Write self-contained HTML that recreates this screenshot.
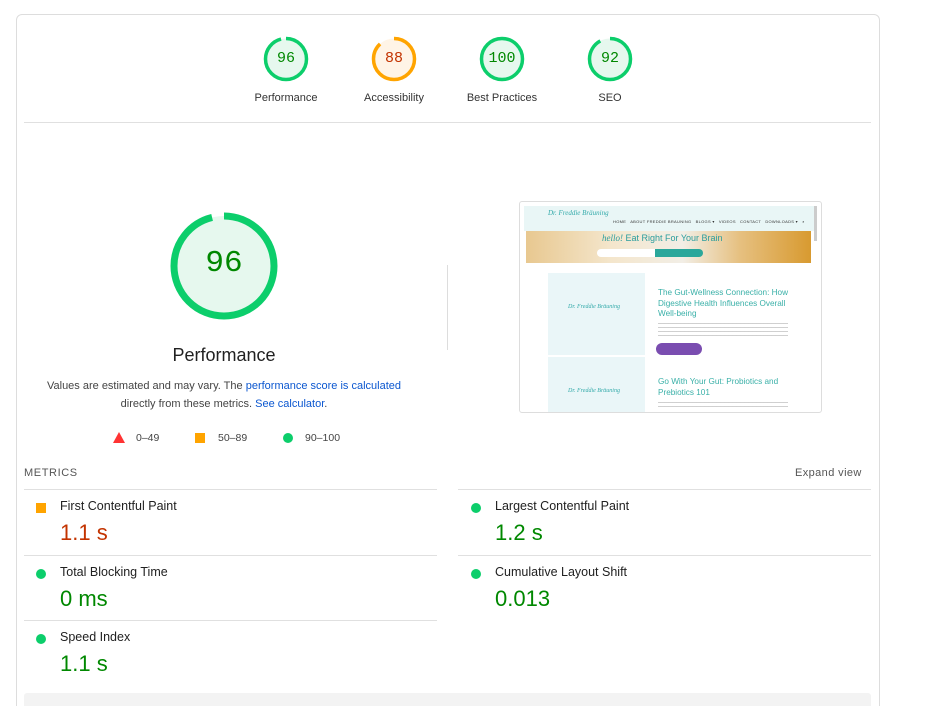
<!DOCTYPE html>
<html style="width:939px;height:706px;overflow:hidden"><head><meta charset="utf-8"><style>
*{margin:0;padding:0;box-sizing:border-box}
body{width:939px;height:706px;background:#fff;font-family:"Liberation Sans",Arial,sans-serif;position:relative;overflow:hidden;color:#212121}
.card{position:absolute;left:16px;top:14px;width:864px;height:720px;border:1px solid #ddd;border-radius:6px}
.abs{position:absolute}
.gl{position:absolute;width:110px;text-align:center;font-size:11px;color:#333}
.gn{position:absolute;width:50px;text-align:center;font-family:"Liberation Mono",monospace;font-size:15px;line-height:50px}
.hr{position:absolute;height:1px;background:#e0e0e0}
.mt{position:absolute;font-size:12.5px;color:#212121}
.mv{position:absolute;font-size:22px}
.dot{position:absolute;width:10px;height:10px;border-radius:50%;background:#0cce6b}
</style></head><body>
<div class="card"></div>

<svg class="abs" style="left:0;top:0" width="939" height="706">
<g fill="none" stroke-width="3.5">
<circle cx="286" cy="59" r="20.5" fill="#e6f8ee" stroke="none"/>
<circle cx="286" cy="59" r="20.5" stroke="#0cce6b" stroke-dasharray="123.6 200" transform="rotate(-90 286 59)"/>
<circle cx="394" cy="59" r="20.5" fill="#fff4e6" stroke="none"/>
<circle cx="394" cy="59" r="20.5" stroke="#ffa400" stroke-dasharray="113.3 200" transform="rotate(-90 394 59)"/>
<circle cx="502" cy="59" r="20.5" fill="#e6f8ee" stroke="#0cce6b"/>
<circle cx="610" cy="59" r="20.5" fill="#e6f8ee" stroke="none"/>
<circle cx="610" cy="59" r="20.5" stroke="#0cce6b" stroke-dasharray="118.5 200" transform="rotate(-90 610 59)"/>
<circle cx="224" cy="266" r="50" fill="#e6f8ee" stroke="none"/>
<circle cx="224" cy="266" r="50" stroke="#0cce6b" stroke-width="7" stroke-dasharray="301.6 400" transform="rotate(-90 224 266)"/>
</g>
</svg>
<div class="gn" style="left:261px;top:34px;color:#008800">96</div>
<div class="gn" style="left:369px;top:34px;color:#c33300">88</div>
<div class="gn" style="left:477px;top:34px;color:#008800">100</div>
<div class="gn" style="left:585px;top:34px;color:#008800">92</div>
<div class="gl" style="left:231px;top:92px">Performance</div>
<div class="gl" style="left:339px;top:92px">Accessibility</div>
<div class="gl" style="left:447px;top:92px">Best Practices</div>
<div class="gl" style="left:555px;top:92px">SEO</div>
<div class="hr" style="left:24px;top:122px;width:847px"></div>

<div class="abs" style="left:174px;top:246px;width:100px;text-align:center;font-family:'Liberation Mono',monospace;font-size:31px;color:#008800">96</div>
<div class="abs" style="left:124px;top:345px;width:200px;text-align:center;font-size:18px;color:#212121">Performance</div>
<div class="abs" style="left:44px;top:377px;width:360px;text-align:center;font-size:11px;line-height:18px;color:#444">Values are estimated and may vary. The <span style="color:#0b57d0">performance score is calculated</span> directly from these metrics. <span style="color:#0b57d0">See calculator</span>.</div>
<svg class="abs" style="left:113px;top:432px" width="12" height="11"><polygon points="6,0 12,11 0,11" fill="#f33"/></svg>
<div class="abs" style="left:136px;top:432px;font-size:10.5px;color:#444">0–49</div>
<div class="abs" style="left:195px;top:433px;width:10px;height:10px;background:#ffa400"></div>
<div class="abs" style="left:218px;top:432px;font-size:10.5px;color:#444">50–89</div>
<div class="dot" style="left:283px;top:433px"></div>
<div class="abs" style="left:305px;top:432px;font-size:10.5px;color:#444">90–100</div>

<div class="abs" style="left:447px;top:265px;width:1px;height:85px;background:#ddd"></div>

<div class="abs" style="left:519px;top:201px;width:303px;height:212px;border:1px solid #ddd;border-radius:3px;background:#fff;overflow:hidden">
 <div class="abs" style="left:4px;top:4px;width:290px;height:25px;background:#e9f6f6"></div>
 <div class="abs" style="left:28px;top:7px;font-size:7px;color:#3aa;font-style:italic;font-family:'Liberation Serif',serif">Dr. Freddie Bräuning</div>
 <div class="abs" style="left:93px;top:17px;font-size:4px;color:#333;letter-spacing:.3px">HOME &nbsp; ABOUT FREDDIE BRAUNING &nbsp; BLOGS ▾ &nbsp; VIDEOS &nbsp; CONTACT &nbsp; DOWNLOADS ▾ &nbsp; ⌕</div>
 <div class="abs" style="left:6px;top:29px;width:285px;height:32px;background:linear-gradient(90deg,#e8c890,#f4e6cc 30%,#f2eee6 55%,#e6c080 75%,#d89a30)"></div>
 <div class="abs" style="left:82px;top:31px;font-size:9px;color:#2a9d9d"><i style="font-family:'Liberation Serif',serif">hello!</i> Eat Right For Your Brain</div>
 <div class="abs" style="left:77px;top:47px;width:58px;height:8px;background:#fff;border-radius:4px 0 0 4px"></div>
 <div class="abs" style="left:135px;top:47px;width:48px;height:8px;background:#2aa79b;border-radius:0 4px 4px 0"></div>
 <div class="abs" style="left:28px;top:71px;width:97px;height:82px;background:#eaf6f8"></div>
 <div class="abs" style="left:28px;top:155px;width:97px;height:55px;background:#eaf6f8"></div>
 <div class="abs" style="left:48px;top:102px;font-size:6px;color:#3aa;font-style:italic;font-family:'Liberation Serif',serif">Dr. Freddie Bräuning</div>
 <div class="abs" style="left:48px;top:186px;font-size:6px;color:#3aa;font-style:italic;font-family:'Liberation Serif',serif">Dr. Freddie Bräuning</div>
 <div class="abs" style="left:138px;top:86px;width:140px;font-size:8.2px;line-height:10.5px;color:#3ab0a8">The Gut-Wellness Connection: How Digestive Health Influences Overall Well-being</div>
 <div class="abs" style="left:138px;top:120px;width:130px;height:14px;background:repeating-linear-gradient(#fff 0 1px,#bbb 1px 2px,#fff 2px 4px);opacity:.7"></div>
 <div class="abs" style="left:136px;top:141px;width:46px;height:12px;background:#7a4db0;border-radius:6px"></div>
 <div class="abs" style="left:138px;top:175px;width:140px;font-size:8.2px;line-height:10.5px;color:#3ab0a8">Go With Your Gut: Probiotics and Prebiotics 101</div>
 <div class="abs" style="left:138px;top:199px;width:130px;height:9px;background:repeating-linear-gradient(#fff 0 1px,#bbb 1px 2px,#fff 2px 4px);opacity:.7"></div>
 <div class="abs" style="left:294px;top:4px;width:3px;height:35px;background:#ccc"></div>
</div>

<div class="abs" style="left:24px;top:467px;font-size:11px;letter-spacing:.6px;color:#555">METRICS</div>
<div class="abs" style="left:795px;top:467px;font-size:11px;letter-spacing:.4px;color:#555">Expand view</div>
<div class="hr" style="left:24px;top:489px;width:413px"></div>
<div class="hr" style="left:458px;top:489px;width:413px"></div>
<div class="hr" style="left:24px;top:555px;width:413px"></div>
<div class="hr" style="left:458px;top:555px;width:413px"></div>
<div class="hr" style="left:24px;top:620px;width:413px"></div>

<div class="abs" style="left:36px;top:503px;width:10px;height:10px;background:#ffa400"></div>
<div class="mt" style="left:60px;top:499px">First Contentful Paint</div>
<div class="mv" style="left:60px;top:520px;color:#c33300">1.1 s</div>
<div class="dot" style="left:471px;top:503px"></div>
<div class="mt" style="left:495px;top:499px">Largest Contentful Paint</div>
<div class="mv" style="left:495px;top:520px;color:#008800">1.2 s</div>
<div class="dot" style="left:36px;top:569px"></div>
<div class="mt" style="left:60px;top:565px">Total Blocking Time</div>
<div class="mv" style="left:60px;top:586px;color:#008800">0 ms</div>
<div class="dot" style="left:471px;top:569px"></div>
<div class="mt" style="left:495px;top:565px">Cumulative Layout Shift</div>
<div class="mv" style="left:495px;top:586px;color:#008800">0.013</div>
<div class="dot" style="left:36px;top:634px"></div>
<div class="mt" style="left:60px;top:630px">Speed Index</div>
<div class="mv" style="left:60px;top:651px;color:#008800">1.1 s</div>

<div class="abs" style="left:24px;top:693px;width:847px;height:20px;background:#f3f3f3;border-radius:3px"></div>
</body></html>
